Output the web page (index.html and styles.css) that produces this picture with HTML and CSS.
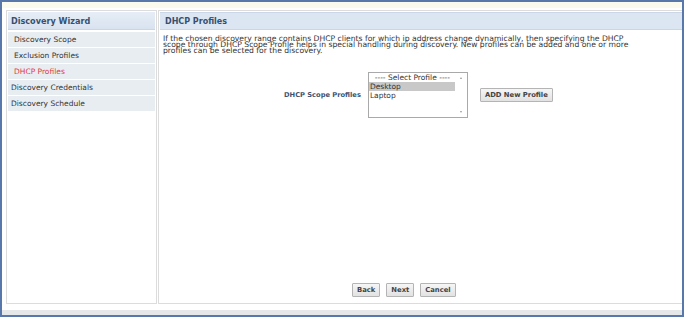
FILE: index.html
```html
<!DOCTYPE html>
<html lang="en">
<head>
    <meta charset="UTF-8">
    <title>Discovery Wizard</title>
    <link rel="stylesheet" href="styles.css">
</head>
<body>
    <div class="window">
        <div class="topbar"></div>
        <div class="main">
            <div class="sidebar">
                <div class="side-head">Discovery Wizard</div>
                <ul class="steps">
                    <li class="sub">Discovery Scope</li>
                    <li class="sub">Exclusion Profiles</li>
                    <li class="sub active">DHCP Profiles</li>
                    <li>Discovery Credentials</li>
                    <li>Discovery Schedule</li>
                </ul>
            </div>
            <div class="panel">
                <div class="panel-head">DHCP Profiles</div>
                <p class="intro">If the chosen discovery range contains DHCP clients for which ip address change dynamically, then specifying the DHCP scope through DHCP Scope Profile helps in special handling during discovery. New profiles can be added and one or more profiles can be selected for the discovery.</p>
                <div class="profile-row">
                    <span class="field-label">DHCP Scope Profiles</span>
                    <div class="listbox">
                        <div class="options">
                            <div class="opt placeholder">---- Select Profile ----</div>
                            <div class="opt selected">Desktop</div>
                            <div class="opt">Laptop</div>
                        </div>
                        <div class="scroll">
                            <span class="arrow up"></span>
                            <span class="arrow down"></span>
                        </div>
                    </div>
                    <button class="btn">ADD New Profile</button>
                </div>
                <div class="actions">
                    <button class="btn">Back</button>
                    <button class="btn">Next</button>
                    <button class="btn">Cancel</button>
                </div>
            </div>
        </div>
        <div class="gap"></div>
        <div class="statusbar"></div>
    </div>
</body>
</html>
```

FILE: styles.css
```css
body {
    margin: 0;
    font-family: "DejaVu Sans", Verdana, sans-serif;
    background: #fff;
}
.window {
    width: 684px;
    height: 317px;
    box-sizing: border-box;
    border: 2px solid #5877ab;
    display: flex;
    flex-direction: column;
}
.topbar {
    height: 6px;
    background: #fbfaee;
}
.main {
    height: 296px;
    display: flex;
    padding: 2px 0 0 4px;
    box-sizing: border-box;
    gap: 1px;
}
.sidebar {
    width: 151px;
    box-sizing: border-box;
    border: 1px solid #dcdcdc;
    padding: 1px;
}
.side-head {
    height: 18px;
    line-height: 18px;
    padding-left: 3px;
    background: linear-gradient(#e6edf6, #d9e3f0);
    border-bottom: 1px solid #c9d6e6;
    box-sizing: border-box;
    font-size: 8.1px;
    font-weight: bold;
    color: #36506f;
}
.steps {
    list-style: none;
    margin: 2px 0 0;
    padding: 0;
}
.steps li {
    height: 15px;
    line-height: 15px;
    margin-bottom: 1px;
    padding-left: 3px;
    background: #e8edf2;
    font-size: 7.5px;
    color: #333;
}
.steps li.sub {
    padding-left: 6px;
}
.steps li.active {
    color: #e23a46;
}
.panel {
    flex: 1;
    box-sizing: border-box;
    border: 1px solid #dcdcdc;
    border-right: none;
    padding: 1px 0 6px 1px;
    display: flex;
    flex-direction: column;
}
.panel-head {
    height: 18px;
    line-height: 18px;
    padding-left: 5px;
    background: #dce6f3;
    border-top: 1px solid #cbd7e7;
    border-bottom: 1px solid #c9d6e6;
    box-sizing: border-box;
    font-size: 8px;
    font-weight: bold;
    color: #36506f;
}
.intro {
    width: 476px;
    margin: 6px 0 0 3px;
    font-size: 7.65px;
    line-height: 5.8px;
    color: #333;
}
.profile-row {
    display: flex;
    align-items: center;
    margin-top: 19px;
    padding-left: 124px;
}
.field-label {
    font-size: 6.7px;
    font-weight: bold;
    color: #3d5470;
    margin-right: 7px;
}
.listbox {
    width: 100px;
    height: 46px;
    box-sizing: border-box;
    border: 1px solid #a9a9a9;
    display: flex;
    background: #fff;
}
.options {
    flex: 1;
}
.opt {
    height: 9px;
    line-height: 9px;
    padding-left: 1px;
    font-size: 7.5px;
    color: #333;
}
.opt.placeholder {
    text-align: center;
}
.opt.selected {
    background: #c8c8c8;
}
.scroll {
    width: 12px;
    display: flex;
    flex-direction: column;
    justify-content: space-between;
    align-items: center;
    padding: 4px 0;
}
.arrow {
    width: 0;
    height: 0;
    border-left: 1.5px solid transparent;
    border-right: 1.5px solid transparent;
}
.arrow.up {
    border-bottom: 2px solid #999;
}
.arrow.down {
    border-top: 2px solid #999;
}
.btn {
    height: 14px;
    padding: 0 4px;
    border: 1px solid #b4b4b4;
    border-radius: 1px;
    background: linear-gradient(#f6f6f6, #e2e2e2);
    font-family: "DejaVu Sans", Verdana, sans-serif;
    font-size: 6.8px;
    font-weight: bold;
    color: #444;
}
.profile-row .btn {
    margin-left: 12px;
    width: 73px;
}
.actions {
    margin-top: auto;
    padding-left: 192px;
    display: flex;
    gap: 6px;
}
.gap {
    height: 6px;
}
.statusbar {
    height: 5px;
    background: #e4e8e9;
}
```
